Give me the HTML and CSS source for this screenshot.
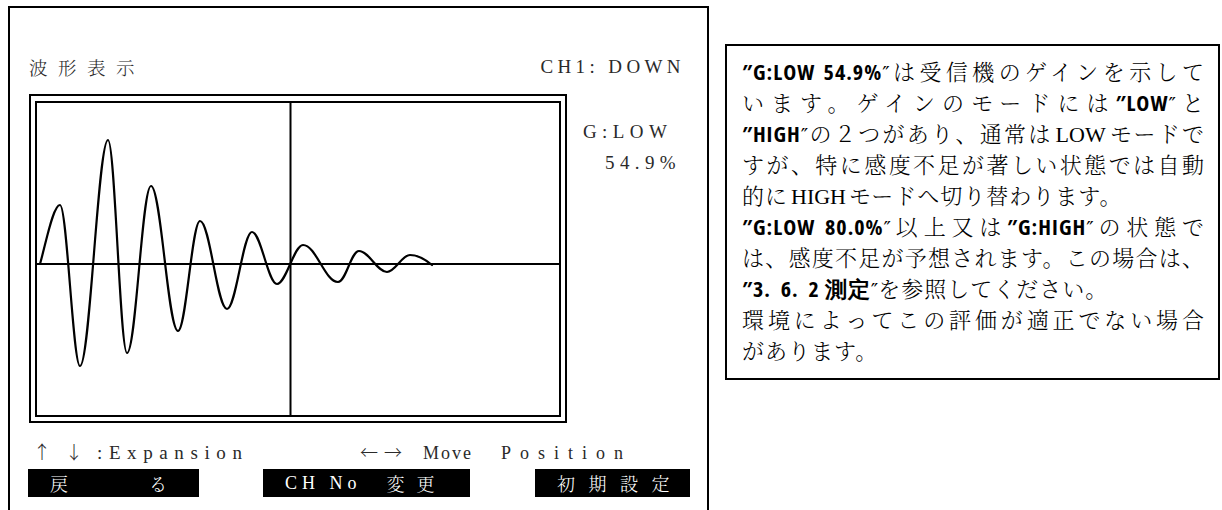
FILE: index.html
```html
<!DOCTYPE html>
<html lang="ja">
<head>
<meta charset="utf-8">
<title>波形表示</title>
<link rel="stylesheet" href="styles.css">
</head>
<body>
<div class="page">
  <section class="device">
    <div class="head">
      <span class="title">波形表示</span>
      <span class="ch">CH1:&nbsp;DOWN</span>
    </div>
    <div class="mid">
      <div class="scope">
        <div class="screen">
          <svg class="wave" width="522" height="313" viewBox="37 102 522 313" xmlns="http://www.w3.org/2000/svg">
            <line x1="37" y1="263" x2="559" y2="263" stroke="#000" stroke-width="2"/>
            <line x1="290.5" y1="102" x2="290.5" y2="415" stroke="#000" stroke-width="2"/>
            <path fill="none" stroke="#000" stroke-width="2.2" stroke-linejoin="round" stroke-linecap="round"
              d="M40 263 C46 242, 53 204, 60 204
                 C67 204, 73 365, 80 365
                 C90 365, 98 139, 108 139
                 C115 139, 120 352, 127 352
                 C136 352, 142 185, 151 185
                 C161 185, 168 330, 178 330
                 C186 330, 192 220, 200 220
                 C210 220, 217 308, 227 308
                 C236 308, 243 231, 252 231
                 C261 231, 268 283, 277 283
                 C286 283, 294 244, 303 244
                 C316 244, 325 281, 338 281
                 C346 281, 351 250, 359 250
                 C369 250, 377 271, 387 271
                 C395 271, 402 254, 410 254
                 C418 254, 426 259, 432 264"/>
          </svg>
        </div>
      </div>
      <div class="gain">
        <div class="g1">G:LOW</div>
        <div class="g2">54.9%</div>
      </div>
    </div>
    <div class="hint">
      <span class="h1"><span class="arr">↑↓</span><span class="lat">:Expansion</span></span>
      <span class="h2"><span class="arr arr2">←→</span><span class="lat mv">Move</span><span class="lat ps">Position</span></span>
    </div>
    <div class="keys">
      <span class="key k1"><span>戻</span><span>る</span></span>
      <span class="key k2"><span class="lat">CH No</span><span class="kj">変更</span></span>
      <span class="key k3">初期設定</span>
    </div>
  </section>

  <section class="note">
    <div class="ln j"><b>″G:LOW 54.9%</b><i>″</i>は受信機のゲインを示して</div>
    <div class="ln j">います。ゲインのモードには<b>″LOW</b><i>″</i>と</div>
    <div class="ln j"><b>″HIGH</b><i>″</i>の２つがあり、通常は<span class="lat">LOW</span>モードで</div>
    <div class="ln j">すが、特に感度不足が著しい状態では自動</div>
    <div class="ln">的に<span class="lat">HIGH</span>モードへ切り替わります。</div>
    <div class="ln j"><b>″G:LOW 80.0%</b><i>″</i>以上又は<b>″G:HIGH</b><i>″</i>の状態で</div>
    <div class="ln j">は、感度不足が予想されます。この場合は、</div>
    <div class="ln"><b>″3.&nbsp; 6.&nbsp; 2 測定</b><i>″</i>を参照してください。</div>
    <div class="ln j">環境によってこの評価が適正でない場合</div>
    <div class="ln">があります。</div>
  </section>
</div>
</body>
</html>
```

FILE: styles.css
```css
html, body {
  margin: 0;
  padding: 0;
  background: #fff;
}

body {
  width: 1222px;
  height: 510px;
  overflow: hidden;
  font-family: "Noto Serif CJK JP", "Noto Sans CJK JP", serif;
  color: #000;
}

.page {
  display: flex;
  align-items: flex-start;
}

/* ---------- left device panel ---------- */
.device {
  box-sizing: border-box;
  width: 701px;
  height: 540px;
  margin: 6px 0 0 8px;
  border: 2px solid #000;
  border-bottom: none;
  padding: 49px 0 0 19px;
  color: #2a2a2a;
}

.head {
  display: flex;
  justify-content: space-between;
  align-items: center;
  width: 656px;
  height: 20px;
  line-height: 20px;
}

.title {
  font-size: 18.5px;
  font-weight: 300;
  letter-spacing: 10.5px;
}

.ch {
  font-family: "Liberation Serif", serif;
  font-size: 19px;
  letter-spacing: 4.4px;
}

.mid {
  display: flex;
  align-items: flex-start;
  margin-top: 17px;
}

.scope {
  box-sizing: border-box;
  width: 538px;
  height: 329px;
  border: 2px solid #000;
  padding: 5px 4px 4px 4px;
}

.screen {
  box-sizing: border-box;
  width: 100%;
  height: 100%;
  border: 2px solid #000;
  overflow: hidden;
}

.wave {
  display: block;
}

.gain {
  margin-left: 16px;
  padding-top: 28px;
  font-family: "Liberation Serif", serif;
  font-size: 19px;
  line-height: 20px;
}

.g1 {
  letter-spacing: 5.4px;
}

.g2 {
  margin-top: 11px;
  padding-left: 22px;
  letter-spacing: 5.4px;
}

.hint {
  display: flex;
  margin-top: 17px;
  padding-left: 4px;
  height: 22px;
  line-height: 22px;
  font-size: 19px;
}

.h1 {
  width: 327px;
  display: flex;
  align-items: baseline;
}

.h2 {
  display: flex;
  align-items: baseline;
}

.arr {
  font-family: "Noto Sans CJK JP", sans-serif;
  font-size: 18px;
  font-weight: 300;
  letter-spacing: 14px;
}

.arr2 {
  letter-spacing: 6px;
  margin-right: 15px;
}

.lat {
  font-family: "Liberation Serif", serif;
  letter-spacing: 6.6px;
}

.h2 .lat {
  font-size: 18px;
}

.h2 .mv {
  letter-spacing: 2px;
  margin-right: 28px;
}

.h2 .ps {
  letter-spacing: 9px;
}

.keys {
  display: flex;
  margin-top: 7px;
  height: 28px;
}

.key {
  box-sizing: border-box;
  display: flex;
  align-items: center;
  height: 28px;
  background: #000;
  color: #fff;
  font-size: 18px;
  font-weight: 300;
  line-height: 28px;
  white-space: nowrap;
}

.k1 {
  width: 171px;
  margin-left: -1px;
  padding: 0 32px 0 22px;
  justify-content: space-between;
}

.k2 {
  width: 207px;
  margin-left: 64px;
  padding-left: 22px;
}

.k2 .lat {
  letter-spacing: 5px;
  margin-right: 25px;
}

.kj {
  letter-spacing: 12px;
}

.k3 {
  width: 155px;
  margin-left: 65px;
  padding-left: 22px;
  letter-spacing: 13.5px;
}

/* ---------- right explanation box ---------- */
.note {
  box-sizing: border-box;
  width: 495px;
  height: 336px;
  margin: 44px 0 0 16px;
  border: 2px solid #000;
  padding: 9px 13px 0 15px;
  font-size: 22px;
  line-height: 31px;
  letter-spacing: 1px;
  font-weight: 300;
}

.ln {
  white-space: nowrap;
  height: 31px;
}

.ln.j {
  text-align: justify;
  text-align-last: justify;
}

.note b {
  font-family: "Open Sans", "DejaVu Sans Condensed", "Liberation Sans", sans-serif;
  font-stretch: 75%;
  font-size: 22px;
  font-weight: 700;
  letter-spacing: 1px;
}

.note i {
  font-family: "DejaVu Sans", sans-serif;
  font-style: normal;
  font-weight: 400;
  font-size: 20px;
  letter-spacing: 0;
}

.note .lat {
  letter-spacing: 0;
  font-weight: 400;
  padding: 0 3px;
}
```
